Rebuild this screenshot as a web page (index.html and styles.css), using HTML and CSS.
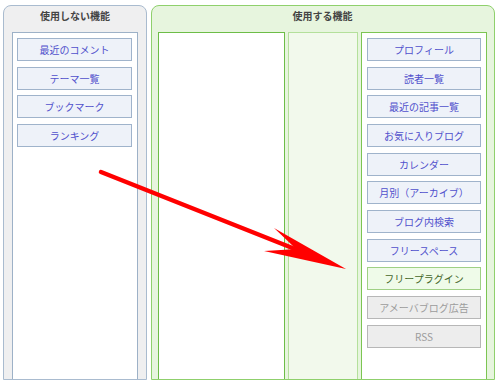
FILE: index.html
```html
<!DOCTYPE html>
<html lang="ja">
<head>
    <meta charset="UTF-8">
    <title>機能の設定</title>
    <link rel="stylesheet" href="styles.css">
</head>
<body>
    <div class="layout">
        <div class="panel unused">
            <h2>使用しない機能</h2>
            <div class="list">
                <div class="item">最近のコメント</div>
                <div class="item">テーマ一覧</div>
                <div class="item">ブックマーク</div>
                <div class="item">ランキング</div>
            </div>
        </div>

        <div class="panel used">
            <h2>使用する機能</h2>
            <div class="columns">
                <div class="list col-main"></div>
                <div class="list col-side"></div>
                <div class="list col-right">
                    <div class="item">プロフィール</div>
                    <div class="item">読者一覧</div>
                    <div class="item">最近の記事一覧</div>
                    <div class="item">お気に入りブログ</div>
                    <div class="item">カレンダー</div>
                    <div class="item">月別（アーカイブ）</div>
                    <div class="item">ブログ内検索</div>
                    <div class="item">フリースペース</div>
                    <div class="item plugin">フリープラグイン</div>
                    <div class="item fixed">アメーバブログ広告</div>
                    <div class="item fixed">RSS</div>
                </div>
            </div>
        </div>
    </div>

    <!-- drag hint -->
    <svg class="arrow" width="500" height="386" viewBox="0 0 500 386">
        <line x1="101" y1="172" x2="300" y2="251" stroke="#ff0000" stroke-width="4.5" stroke-linecap="round"/>
        <path d="M346 269 L274 228 Q290 243 296 249 Q282 250 264 251 Z" fill="#ff0000"/>
    </svg>
</body>
</html>
```

FILE: styles.css
```css
body {
    margin: 0;
    padding: 5px 0 0 3px;
    font-family: "Noto Sans CJK JP", sans-serif;
    background-color: #ffffff;
    position: relative;
    height: 381px;
    overflow: hidden;
}
.layout {
    display: flex;
    gap: 4px;
}
.panel {
    box-sizing: border-box;
    height: 375px;
    border: 1px solid;
    border-radius: 8px 8px 0 0;
    display: flex;
    flex-direction: column;
}
.panel h2 {
    margin: 0;
    height: 26px;
    line-height: 20px;
    font-size: 10px;
    font-weight: bold;
    color: #444;
    text-align: center;
}
.unused {
    width: 144px;
    background-color: #efeff0;
    border-color: #a9bbcf;
    padding: 0 8px 0 8px;
}
.used {
    width: 344px;
    background-color: #e7f5de;
    border-color: #8fd06c;
    padding: 0 7px 0 6px;
}
.list {
    box-sizing: border-box;
    flex: 1;
    background-color: #ffffff;
    border: 1px solid;
    border-bottom: none;
    padding: 5px 5px 0 4px;
}
.unused .list {
    border-color: #9db1c7;
}
.columns {
    flex: 1;
    display: flex;
    gap: 3px;
}
.col-main {
    flex: none;
    width: 127px;
    border-color: #6dbd47;
}
.col-side {
    flex: none;
    width: 70px;
    background-color: #f2f9ec;
    border-color: #b4e09b;
}
.col-right {
    flex: none;
    width: 126px;
    border-color: #7cc552;
    padding: 5px 5px 0 5px;
}

/* Feature buttons */
.item {
    box-sizing: border-box;
    height: 23px;
    margin-bottom: 5.67px;
    border: 1px solid #9fb3cb;
    background-color: #eef2f9;
    color: #5050cc;
    font-size: 10px;
    line-height: 21px;
    text-align: center;
    white-space: nowrap;
}
.item.plugin {
    background-color: #effbe9;
    border-color: #9fd084;
    color: #44672a;
}
.item.fixed {
    background-color: #ededed;
    border-color: #b7b7b7;
    color: #9c9c9c;
}
.arrow {
    position: absolute;
    top: 0;
    left: 0;
    pointer-events: none;
}
```
